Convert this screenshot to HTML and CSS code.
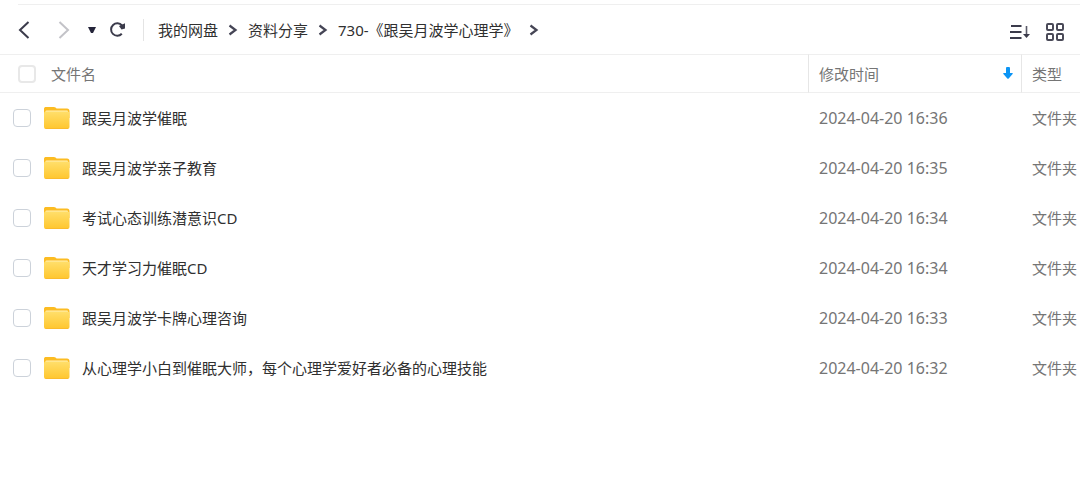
FILE: index.html
```html
<!DOCTYPE html>
<html lang="zh-CN">
<head>
  <meta charset="UTF-8">
  <meta name="viewport" content="width=device-width, initial-scale=1.0">
  <title>我的网盘</title>
  <link rel="stylesheet" href="styles.css">
</head>
<body>
  <svg class="sprite" aria-hidden="true">
    <defs>
      <linearGradient id="folderFront" x1="0" y1="0" x2="0" y2="1">
        <stop offset="0" stop-color="#ffdf6b"/>
        <stop offset="1" stop-color="#ffc62e"/>
      </linearGradient>
    </defs>
    <symbol id="folder" viewBox="0 0 26 24">
      <path d="M0 3C0 1.500.8 1 2.200 1h7.500c1 0 1.600.2 2.200.8l.6.7H23C24.600 2.500 25.500 3.400 25.500 5V12H0z" fill="#fcbc22"/>
      <rect x="1.500" y="4.500" width="22.500" height="4" rx="1" fill="#fff0b8"/>
      <rect x="0" y="5.500" width="25.500" height="17.500" rx="2" fill="url(#folderFront)"/>
      <path d="M1.500 22.500h22.500" stroke="#fbbb2c" stroke-width="1"/>
    </symbol>
    <symbol id="crumb" viewBox="0 0 10 12">
      <path d="M1.500 1.500L7.500 6l-6 4.500" fill="none" stroke="#454555" stroke-width="2.200"/>
    </symbol>
  </svg>

  <header class="toolbar">
    <nav class="history">
      <button type="button" aria-label="后退">
        <svg width="12" height="18" viewBox="0 0 12 18"><path d="M10.500 1L2 9l8.500 8" fill="none" stroke="#3b3b4b" stroke-width="2"/></svg>
      </button>
      <button type="button" aria-label="前进" class="forward">
        <svg width="12" height="18" viewBox="0 0 12 18"><path d="M1.500 1L10 9l-8.500 8" fill="none" stroke="#c3c3c8" stroke-width="2"/></svg>
      </button>
      <button type="button" aria-label="历史记录" class="recent">
        <svg width="8" height="8" viewBox="0 0 8 8"><path d="M0 1h8L5 7H3z" fill="#25253a"/></svg>
      </button>
      <button type="button" aria-label="刷新" class="refresh">
        <svg width="17" height="17" viewBox="0 0 17 17">
          <path d="M12.800 12.800A6.200 6.200 0 1 1 13 4.500" fill="none" stroke="#3b3b4b" stroke-width="2"/>
          <path d="M10 5l6-2.800v5.300l-3.500 1z" fill="#3b3b4b"/>
        </svg>
      </button>
    </nav>
    <nav class="crumbs">
      <a href="#">我的网盘</a>
      <svg class="sep"><use href="#crumb"/></svg>
      <a href="#">资料分享</a>
      <svg class="sep"><use href="#crumb"/></svg>
      <a href="#">730-《跟吴月波学心理学》</a>
      <svg class="sep"><use href="#crumb"/></svg>
    </nav>
    <div class="views">
      <button type="button" aria-label="排序">
        <svg width="20" height="16" viewBox="0 0 20 16">
          <path d="M1 2h10.500M0 8h11.500M0 14h11.500" stroke="#3b3b4b" stroke-width="2"/>
          <path d="M16.500 2v10" stroke="#5a5a68" stroke-width="1.600"/>
          <path d="M13 10h7L16.500 14z" fill="#3b3b4b"/>
        </svg>
      </button>
      <button type="button" aria-label="网格视图">
        <svg width="18" height="18" viewBox="0 0 18 18" fill="none" stroke="#4a4a58" stroke-width="2">
          <rect x="1" y="1" width="6" height="6" rx="1"/>
          <rect x="11" y="1" width="6" height="6" rx="1"/>
          <rect x="1" y="11" width="6" height="6" rx="1"/>
          <rect x="11" y="11" width="6" height="6" rx="1"/>
        </svg>
      </button>
    </div>
  </header>

  <table class="files">
    <colgroup>
      <col>
      <col class="col-time">
      <col class="col-type">
    </colgroup>
    <thead>
      <tr>
        <th><label class="all"><input type="checkbox">文件名</label></th>
        <th>
          <div class="sort">修改时间
            <svg width="10" height="13" viewBox="0 0 10 13"><path d="M3 1.500a1.500 1.500 0 0 1 4 0V6h2.200c.7 0 .8.600.4 1L5.700 11.500a1 1 0 0 1-1.400 0L.4 7C0 6.600.1 6 .8 6H3z" fill="#0c95f5"/></svg>
          </div>
        </th>
        <th>类型</th>
      </tr>
    </thead>
    <tbody>
      <tr>
        <td><label class="file"><input type="checkbox"><svg class="folder"><use href="#folder"/></svg>跟吴月波学催眠</label></td>
        <td class="time">2024-04-20 16:36</td>
        <td>文件夹</td>
      </tr>
      <tr>
        <td><label class="file"><input type="checkbox"><svg class="folder"><use href="#folder"/></svg>跟吴月波学亲子教育</label></td>
        <td class="time">2024-04-20 16:35</td>
        <td>文件夹</td>
      </tr>
      <tr>
        <td><label class="file"><input type="checkbox"><svg class="folder"><use href="#folder"/></svg>考试心态训练潜意识CD</label></td>
        <td class="time">2024-04-20 16:34</td>
        <td>文件夹</td>
      </tr>
      <tr>
        <td><label class="file"><input type="checkbox"><svg class="folder"><use href="#folder"/></svg>天才学习力催眠CD</label></td>
        <td class="time">2024-04-20 16:34</td>
        <td>文件夹</td>
      </tr>
      <tr>
        <td><label class="file"><input type="checkbox"><svg class="folder"><use href="#folder"/></svg>跟吴月波学卡牌心理咨询</label></td>
        <td class="time">2024-04-20 16:33</td>
        <td>文件夹</td>
      </tr>
      <tr>
        <td><label class="file"><input type="checkbox"><svg class="folder"><use href="#folder"/></svg>从心理学小白到催眠大师，每个心理学爱好者必备的心理技能</label></td>
        <td class="time">2024-04-20 16:32</td>
        <td>文件夹</td>
      </tr>
    </tbody>
  </table>
</body>
</html>
```
FILE: styles.css
```css
:root {
  --text: #303030;
  --muted: #757575;
  --line: #efefef;
}
* { box-sizing: border-box; }
body {
  margin: 0;
  padding-top: 4px;
  background: #fff;
  color: var(--text);
  font-family: "Noto Sans", "Noto Sans CJK SC", sans-serif;
  font-size: 15px;
  line-height: 20px;
}
svg { display: block; flex: none; }
.sprite { position: absolute; width: 0; height: 0; }
button {
  display: block;
  padding: 0;
  border: none;
  background: none;
  cursor: pointer;
}

/* toolbar */
.toolbar {
  display: flex;
  align-items: center;
  height: 50px;
  margin-left: 18px;
  border-top: 1px solid var(--line);
}
.history {
  display: flex;
  align-items: center;
  height: 22px;
  padding-right: 17px;
  border-right: 1px solid #e4e4e4;
}
.forward { margin-left: 28px; }
.recent { margin-left: 18px; }
.refresh { margin-left: 13px; }
.crumbs {
  display: flex;
  align-items: center;
  gap: 10px;
  padding-left: 14px;
}
.crumbs a {
  color: var(--text);
  text-decoration: none;
  white-space: nowrap;
}
.crumbs a:hover { color: #0c95f5; }
.sep { width: 10px; height: 12px; }
.views {
  display: flex;
  align-items: center;
  gap: 16px;
  margin-left: auto;
  padding: 4px 16px 0 0;
}

/* file list */
.files {
  width: 100%;
  table-layout: fixed;
  border-collapse: separate;
  border-spacing: 0;
}
.col-time { width: 213px; }
.col-type { width: 59px; }
th, td {
  padding: 0 0 0 10px;
  text-align: left;
  font-weight: normal;
  color: var(--muted);
  white-space: nowrap;
}
th {
  height: 39px;
  border-top: 1px solid var(--line);
  border-bottom: 1px solid var(--line);
}
th + th { border-left: 1px solid #e6e6e6; }
td { height: 50px; }
td + td { padding-left: 11px; }
td:first-child { padding-left: 13px; }
th:first-child { padding-left: 18px; }
.time { font-size: 16px; }
.all, .file {
  display: flex;
  align-items: center;
}
.all { gap: 15px; }
.file { color: var(--text); }
.sort {
  display: flex;
  align-items: center;
  justify-content: space-between;
  padding-right: 8px;
}
input[type="checkbox"] {
  appearance: none;
  flex: none;
  width: 18px;
  height: 18px;
  margin: 0;
  border: 1px solid #ccd2da;
  border-radius: 4px;
  background: #fff;
}
.all input { border: 2px solid #e8e8e8; }
input[type="checkbox"]:checked { background: #0c95f5; }
.folder {
  width: 26px;
  height: 24px;
  margin: 0 12px 0 13px;
}
```
